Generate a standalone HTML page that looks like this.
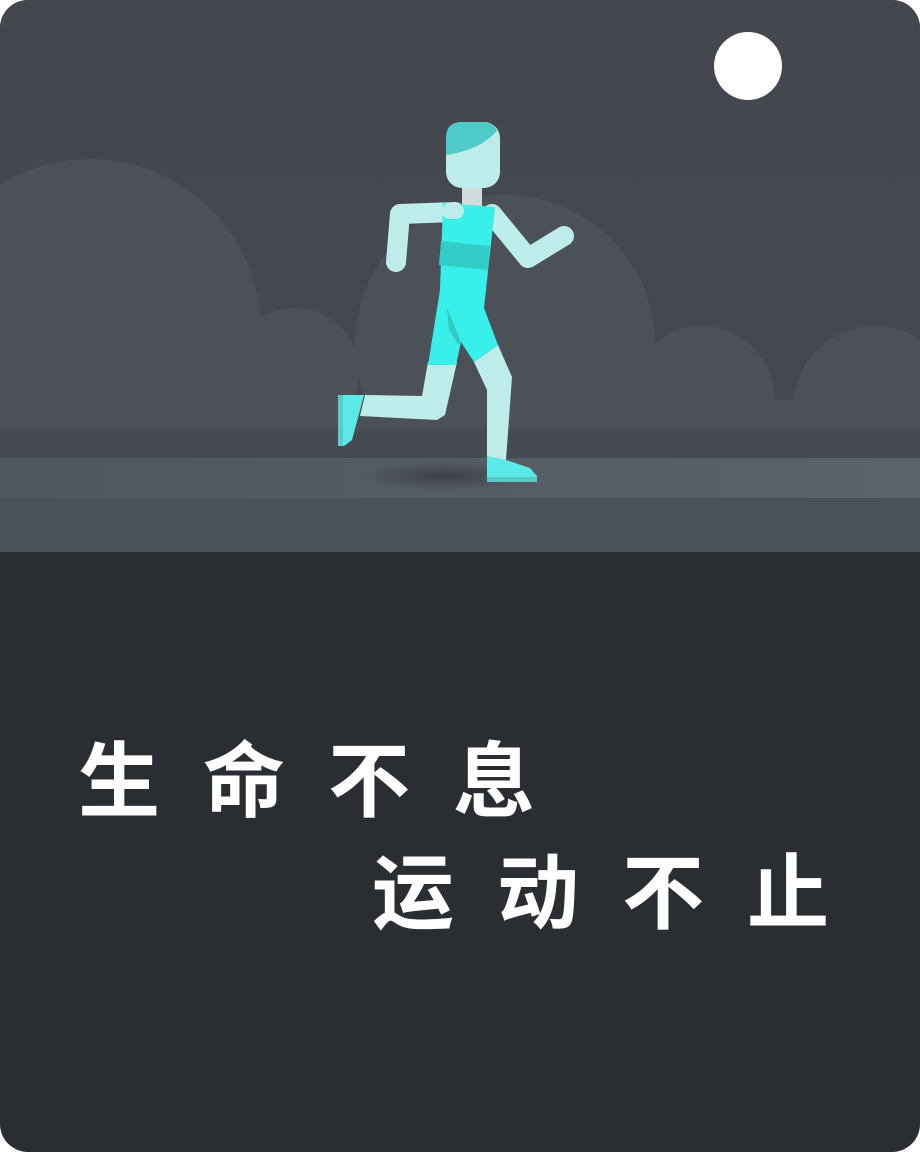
<!DOCTYPE html>
<html><head><meta charset="utf-8"><style>
html,body{margin:0;padding:0;background:#fff;}
.card{position:relative;width:920px;height:1152px;border-radius:28px;overflow:hidden;background:#2a2d32;}
svg{position:absolute;left:0;top:0;}
.t{position:absolute;color:#fff;font-family:"Liberation Sans","Noto Sans CJK SC",sans-serif;font-weight:bold;font-size:82px;letter-spacing:43px;line-height:1;white-space:nowrap;}
</style></head><body>
<div class="card">
<svg width="920" height="1152" viewBox="0 0 920 1152">
<defs>
<linearGradient id="sky" x1="0" y1="0" x2="0" y2="1"><stop offset="0" stop-color="#44474e"/><stop offset="1" stop-color="#454950"/></linearGradient>
<linearGradient id="road" x1="0" y1="0" x2="1" y2="0"><stop offset="0" stop-color="#50565d"/><stop offset="1" stop-color="#5b626a"/></linearGradient>
<radialGradient id="sh"><stop offset="0" stop-color="#3a3e43" stop-opacity=".9"/><stop offset="1" stop-color="#3a3e43" stop-opacity="0"/></radialGradient>
</defs>
<rect x="0" y="0" width="920" height="552" fill="url(#sky)"/>
<g fill="#4c5158">
<circle cx="90" cy="330" r="171"/>
<circle cx="295" cy="372" r="64"/>
<circle cx="505" cy="345" r="150"/>
<circle cx="702" cy="398" r="72"/>
<circle cx="875" cy="408" r="82"/>
<rect x="0" y="400" width="920" height="40"/>
</g>
<rect x="0" y="429" width="920" height="29" fill="#464a51"/>
<rect x="0" y="458" width="920" height="40" fill="url(#road)"/>
<rect x="0" y="498" width="920" height="54" fill="#4b5158"/>
<circle cx="748" cy="66" r="34" fill="#fff"/>
<ellipse cx="445" cy="476" rx="85" ry="14" fill="url(#sh)"/>
<g stroke-linejoin="round">
<rect x="462" y="184" width="20" height="22" fill="#d0dcdc"/>
<polyline points="455,212 400,214 396,262" fill="none" stroke="#bdeceb" stroke-width="20" stroke-linecap="round"/>
<polyline points="492,214 528,258 564,236" fill="none" stroke="#bdeceb" stroke-width="20" stroke-linecap="round"/>
<polygon points="428,362 457,362 445,415 437,420 360,416 365,395 422,396" fill="#bdeceb"/>
<polygon points="338,395 364,395 352,440 344,446 338,446" fill="#5ae9e6"/>
<rect x="338" y="395" width="5" height="51" fill="#5ac9c8"/>
<polygon points="474,362 498,345 512,377 506,460 487,458 487,390" fill="#bdeceb"/>
<polygon points="487,456 506,460 530,468 537,476 537,482 487,482" fill="#5ae9e6"/>
<rect x="487" y="477" width="50" height="5" fill="#5ac9c8"/>
<polygon points="443,203 495,207 484,308 498,345 474,362 461,342 456,365 428,365 440,290" fill="#38efe9"/>
<polygon points="447,308 461,342 458,345 449,330" fill="#35c9c6"/>
<polygon points="441,241 490,246 488,270 439,265" fill="#32cdc9"/>
<rect x="442" y="203" width="22" height="16" rx="8" fill="#bdeceb"/>
<rect x="446" y="122" width="54" height="66" rx="16" fill="#bdeceb"/>
<path d="M446,138 Q446,122 462,122 L484,122 Q494,122 497,131 Q480,150 446,155 Z" fill="#4ecbc9"/>
</g>
</svg>
<div class="t" style="left:78px;top:742px;">生命不息</div>
<div class="t" style="left:372px;top:854px;">运动不止</div>
</div>
</body></html>
